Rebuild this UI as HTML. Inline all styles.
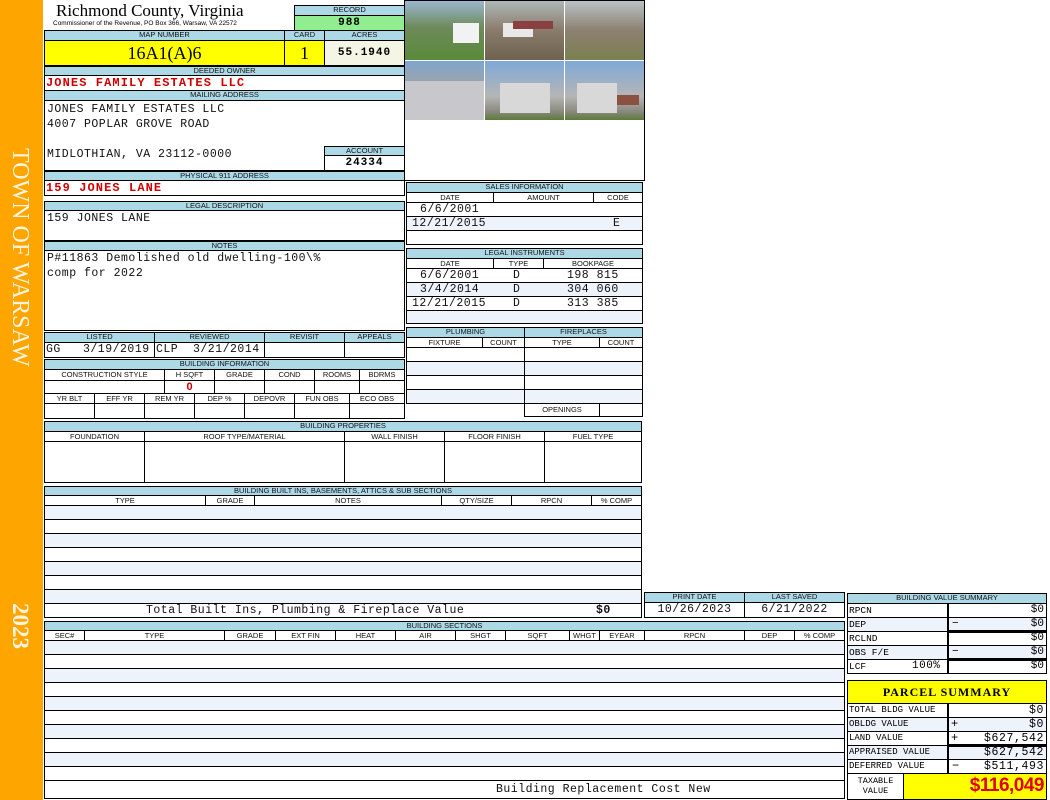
<!DOCTYPE html>
<html><head><meta charset="utf-8"><style>
*{margin:0;padding:0;box-sizing:border-box}
body{width:1050px;height:800px;background:#fff;position:relative;overflow:hidden;font-family:"Liberation Sans",sans-serif}
div{position:absolute}
.b{border:1px solid #000;overflow:hidden}
.h{background:#add8e6;border:1px solid #000;font-size:7.5px;line-height:8px;text-align:center;color:#111;overflow:hidden;white-space:nowrap}
.w{background:#fff;border:1px solid #000;font-size:7.5px;line-height:8px;text-align:center;color:#111;overflow:hidden;white-space:nowrap}
.m{font-family:"Liberation Mono",monospace;font-size:11.5px;white-space:nowrap;color:#111;letter-spacing:0.5px}
.rd{color:#d00000;font-weight:bold;font-family:"Liberation Mono",monospace;font-size:12px;letter-spacing:1.1px}
.l{background:#eef2fb}
.ln{height:1px;background:#000}
.vl{width:1px;background:#000}
</style></head><body>
<div style="left:0;top:0;width:43px;height:800px;background:#ffa500"></div>
<div style="left:10px;top:148px;width:0;height:0"><div style="transform:rotate(90deg);transform-origin:0 0;left:22px;top:0;white-space:nowrap;color:#fff4e0;font-family:'Liberation Serif',serif;font-size:24px;line-height:24px">TOWN OF WARSAW</div></div>
<div style="left:10px;top:603px;width:0;height:0"><div style="transform:rotate(90deg);transform-origin:0 0;left:22px;top:0;white-space:nowrap;color:#fff4e0;font-family:'Liberation Serif',serif;font-size:23px;line-height:24px;font-weight:bold">2023</div></div>

<div style="left:56px;top:1px;font-family:'Liberation Serif',serif;font-size:17px;line-height:20px">Richmond County, Virginia</div>
<div style="left:53px;top:20px;font-size:6.5px;line-height:8px;white-space:nowrap">Commissioner of the Revenue, PO Box 366, Warsaw, VA 22572</div>
<div class="h" style="left:294px;top:5px;width:111px;height:11px">RECORD</div>
<div class="b" style="left:294px;top:15px;width:111px;height:16px;background:#90ee90;text-align:center;font:bold 11px 'Liberation Mono',monospace;line-height:14px;letter-spacing:1px">988</div>
<div class="h" style="left:44px;top:30px;width:241px;height:11px">MAP NUMBER</div>
<div class="h" style="left:284px;top:30px;width:41px;height:11px">CARD</div>
<div class="h" style="left:324px;top:30px;width:81px;height:11px">ACRES</div>
<div class="b" style="left:44px;top:40px;width:241px;height:26px;background:#ffff00;text-align:center;font-family:'Liberation Serif',serif;font-size:18px;line-height:24px">16A1(A)6</div>
<div class="b" style="left:284px;top:40px;width:41px;height:26px;background:#ffff00;text-align:center;font-family:'Liberation Serif',serif;font-size:18px;line-height:24px">1</div>
<div class="b" style="left:324px;top:40px;width:81px;height:26px;background:#f5f5e6;text-align:center;font:bold 11px 'Liberation Mono',monospace;line-height:24px;letter-spacing:1px">55.1940</div>
<div class="h" style="left:44px;top:66px;width:361px;height:10px">DEEDED OWNER</div>
<div class="b" style="left:44px;top:75px;width:361px;height:16px"><div class="rd" style="left:1px;top:0">JONES FAMILY ESTATES LLC</div></div>
<div class="h" style="left:44px;top:90px;width:361px;height:11px">MAILING ADDRESS</div>
<div class="b" style="left:44px;top:100px;width:361px;height:71px">
<div class="m" style="left:2px;top:2px">JONES FAMILY ESTATES LLC</div>
<div class="m" style="left:2px;top:17px">4007 POPLAR GROVE ROAD</div>
<div class="m" style="left:2px;top:47px">MIDLOTHIAN, VA 23112-0000</div></div>
<div class="h" style="left:324px;top:146px;width:81px;height:10px">ACCOUNT</div>
<div class="b" style="left:324px;top:155px;width:81px;height:16px;text-align:center;font:bold 11px 'Liberation Mono',monospace;line-height:14px;letter-spacing:1px">24334</div>
<div class="h" style="left:44px;top:171px;width:361px;height:10px">PHYSICAL 911 ADDRESS</div>
<div class="b" style="left:44px;top:180px;width:361px;height:16px"><div class="rd" style="left:1px;top:0">159 JONES LANE</div></div>
<div class="h" style="left:44px;top:201px;width:361px;height:10px">LEGAL DESCRIPTION</div>
<div class="b" style="left:44px;top:210px;width:361px;height:31px"><div class="m" style="left:2px;top:1px">159 JONES LANE</div></div>
<div class="h" style="left:44px;top:241px;width:361px;height:10px">NOTES</div>
<div class="b" style="left:44px;top:250px;width:361px;height:81px"><div class="m" style="left:2px;top:1px">P#11863 Demolished old dwelling-100\%</div><div class="m" style="left:2px;top:16px">comp for 2022</div></div>

<div class="h" style="left:44px;top:332px;width:111px;height:11px">LISTED</div>
<div class="h" style="left:154px;top:332px;width:111px;height:11px">REVIEWED</div>
<div class="h" style="left:264px;top:332px;width:81px;height:11px">REVISIT</div>
<div class="h" style="left:344px;top:332px;width:61px;height:11px">APPEALS</div>
<div class="b" style="left:44px;top:342px;width:111px;height:16px"><div class="m" style="left:1px;top:0">GG &nbsp;&nbsp;3/19/2019</div></div>
<div class="b" style="left:154px;top:342px;width:111px;height:16px"><div class="m" style="left:1px;top:0">CLP &nbsp;3/21/2014</div></div>
<div class="b" style="left:264px;top:342px;width:81px;height:16px"></div>
<div class="b" style="left:344px;top:342px;width:61px;height:16px"></div>

<div class="h" style="left:44px;top:359px;width:361px;height:11px">BUILDING INFORMATION</div>
<div class="w" style="left:44px;top:369px;width:121px;height:12px;line-height:10px">CONSTRUCTION STYLE</div>
<div class="w" style="left:164px;top:369px;width:51px;height:12px;line-height:10px">H SQFT</div>
<div class="w" style="left:214px;top:369px;width:51px;height:12px;line-height:10px">GRADE</div>
<div class="w" style="left:264px;top:369px;width:51px;height:12px;line-height:10px">COND</div>
<div class="w" style="left:314px;top:369px;width:46px;height:12px;line-height:10px">ROOMS</div>
<div class="w" style="left:359px;top:369px;width:46px;height:12px;line-height:10px">BDRMS</div>
<div class="b" style="left:44px;top:380px;width:121px;height:14px"></div>
<div class="b" style="left:164px;top:380px;width:51px;height:14px;text-align:center;color:#c00;font-weight:bold;font-size:11px;line-height:12px">0</div>
<div class="b" style="left:214px;top:380px;width:51px;height:14px"></div>
<div class="b" style="left:264px;top:380px;width:51px;height:14px"></div>
<div class="b" style="left:314px;top:380px;width:46px;height:14px"></div>
<div class="b" style="left:359px;top:380px;width:46px;height:14px"></div>
<div class="w" style="left:44px;top:393px;width:51px;height:11px;line-height:9px">YR BLT</div>
<div class="w" style="left:94px;top:393px;width:51px;height:11px;line-height:9px">EFF YR</div>
<div class="w" style="left:144px;top:393px;width:51px;height:11px;line-height:9px">REM YR</div>
<div class="w" style="left:194px;top:393px;width:51px;height:11px;line-height:9px">DEP %</div>
<div class="w" style="left:244px;top:393px;width:51px;height:11px;line-height:9px">DEPOVR</div>
<div class="w" style="left:294px;top:393px;width:56px;height:11px;line-height:9px">FUN OBS</div>
<div class="w" style="left:349px;top:393px;width:56px;height:11px;line-height:9px">ECO OBS</div>
<div class="b" style="left:44px;top:403px;width:51px;height:16px"></div>
<div class="b" style="left:94px;top:403px;width:51px;height:16px"></div>
<div class="b" style="left:144px;top:403px;width:51px;height:16px"></div>
<div class="b" style="left:194px;top:403px;width:51px;height:16px"></div>
<div class="b" style="left:244px;top:403px;width:51px;height:16px"></div>
<div class="b" style="left:294px;top:403px;width:56px;height:16px"></div>
<div class="b" style="left:349px;top:403px;width:56px;height:16px"></div>

<!-- photos -->
<div class="b" style="left:404px;top:0;width:241px;height:181px"></div>
<svg style="position:absolute;left:405px;top:1px" width="239" height="119">
<defs>
<linearGradient id="g1" x1="0" y1="0" x2="0" y2="1"><stop offset="0" stop-color="#9bb7d0"/><stop offset=".45" stop-color="#6d8a5a"/><stop offset="1" stop-color="#5a8a3a"/></linearGradient>
<linearGradient id="g2" x1="0" y1="0" x2="0" y2="1"><stop offset="0" stop-color="#aeb7b8"/><stop offset=".5" stop-color="#8a7b6a"/><stop offset="1" stop-color="#6e6250"/></linearGradient>
<linearGradient id="g3" x1="0" y1="0" x2="0" y2="1"><stop offset="0" stop-color="#b9c2c6"/><stop offset=".5" stop-color="#8c8070"/><stop offset="1" stop-color="#7c8050"/></linearGradient>
<linearGradient id="g4" x1="0" y1="0" x2="0" y2="1"><stop offset="0" stop-color="#7fa6cf"/><stop offset=".35" stop-color="#9aa3ad"/><stop offset="1" stop-color="#b8b8b8"/></linearGradient>
<linearGradient id="g5" x1="0" y1="0" x2="0" y2="1"><stop offset="0" stop-color="#7fa9d8"/><stop offset=".6" stop-color="#b5b5b5"/><stop offset=".85" stop-color="#8a8a80"/><stop offset="1" stop-color="#5d7a3a"/></linearGradient>
</defs>
<rect x="0" y="0" width="79" height="59" fill="url(#g1)"/><rect x="48" y="22" width="26" height="20" fill="#f2f2f2"/>
<rect x="80" y="0" width="79" height="59" fill="url(#g2)"/><rect x="98" y="22" width="30" height="14" fill="#e8e8e8"/><rect x="108" y="20" width="40" height="8" fill="#8a4040"/>
<rect x="160" y="0" width="79" height="59" fill="url(#g3)"/>
<rect x="0" y="60" width="79" height="59" fill="url(#g4)"/><rect x="0" y="80" width="79" height="39" fill="#c8c8cc"/>
<rect x="80" y="60" width="79" height="59" fill="url(#g5)"/><rect x="95" y="82" width="50" height="30" fill="#d8d8d8"/>
<rect x="160" y="60" width="79" height="59" fill="url(#g5)"/><rect x="172" y="82" width="40" height="30" fill="#d8d8d8"/><rect x="212" y="94" width="22" height="10" fill="#8a5040"/>
</svg>

<!-- sales -->
<div class="h" style="left:406px;top:182px;width:237px;height:11px">SALES INFORMATION</div>
<div class="w" style="left:406px;top:192px;width:88px;height:11px;line-height:9px">DATE</div>
<div class="w" style="left:493px;top:192px;width:101px;height:11px;line-height:9px">AMOUNT</div>
<div class="w" style="left:593px;top:192px;width:50px;height:11px;line-height:9px">CODE</div>
<div class="b" style="left:406px;top:202px;width:237px;height:43px">
<div class="l" style="left:0;top:14px;width:235px;height:14px"></div>
<div class="ln" style="left:0;top:13px;width:235px"></div><div class="ln" style="left:0;top:27px;width:235px"></div>
<div class="m" style="left:13px;top:0">6/6/2001</div><div class="m" style="left:5px;top:14px">12/21/2015</div><div class="m" style="left:206px;top:14px">E</div></div>

<div class="h" style="left:406px;top:248px;width:237px;height:11px">LEGAL INSTRUMENTS</div>
<div class="w" style="left:406px;top:258px;width:88px;height:11px;line-height:9px">DATE</div>
<div class="w" style="left:493px;top:258px;width:51px;height:11px;line-height:9px">TYPE</div>
<div class="w" style="left:543px;top:258px;width:100px;height:11px;line-height:9px">BOOKPAGE</div>
<div class="b" style="left:406px;top:268px;width:237px;height:56px">
<div class="l" style="left:0;top:14px;width:235px;height:14px"></div><div class="l" style="left:0;top:42px;width:235px;height:14px"></div>
<div class="ln" style="left:0;top:13px;width:235px"></div><div class="ln" style="left:0;top:27px;width:235px"></div><div class="ln" style="left:0;top:41px;width:235px"></div>
<div class="m" style="left:13px;top:0">6/6/2001</div><div class="m" style="left:106px;top:0">D</div><div class="m" style="left:160px;top:0">198 815</div>
<div class="m" style="left:13px;top:14px">3/4/2014</div><div class="m" style="left:106px;top:14px">D</div><div class="m" style="left:160px;top:14px">304 060</div>
<div class="m" style="left:5px;top:28px">12/21/2015</div><div class="m" style="left:106px;top:28px">D</div><div class="m" style="left:160px;top:28px">313 385</div></div>

<div class="h" style="left:406px;top:327px;width:119px;height:11px">PLUMBING</div>
<div class="h" style="left:524px;top:327px;width:119px;height:11px">FIREPLACES</div>
<div class="w" style="left:406px;top:337px;width:77px;height:11px;line-height:9px">FIXTURE</div>
<div class="w" style="left:482px;top:337px;width:43px;height:11px;line-height:9px">COUNT</div>
<div class="w" style="left:524px;top:337px;width:76px;height:11px;line-height:9px">TYPE</div>
<div class="w" style="left:599px;top:337px;width:44px;height:11px;line-height:9px">COUNT</div>
<div class="b" style="left:406px;top:347px;width:119px;height:57px">
<div class="l" style="left:0;top:14px;width:117px;height:14px"></div><div class="l" style="left:0;top:42px;width:117px;height:14px"></div>
<div class="ln" style="left:0;top:13px;width:117px"></div><div class="ln" style="left:0;top:27px;width:117px"></div><div class="ln" style="left:0;top:41px;width:117px"></div></div>
<div class="b" style="left:524px;top:347px;width:119px;height:57px">
<div class="l" style="left:0;top:14px;width:117px;height:14px"></div><div class="l" style="left:0;top:42px;width:117px;height:14px"></div>
<div class="ln" style="left:0;top:13px;width:117px"></div><div class="ln" style="left:0;top:27px;width:117px"></div><div class="ln" style="left:0;top:41px;width:117px"></div></div>
<div class="w" style="left:524px;top:403px;width:76px;height:14px;line-height:12px">OPENINGS</div>
<div class="b" style="left:599px;top:403px;width:44px;height:14px"></div>

<!-- building properties -->
<div class="h" style="left:44px;top:421px;width:598px;height:11px">BUILDING PROPERTIES</div>
<div class="w" style="left:44px;top:431px;width:101px;height:11px;line-height:9px">FOUNDATION</div>
<div class="w" style="left:144px;top:431px;width:201px;height:11px;line-height:9px">ROOF TYPE/MATERIAL</div>
<div class="w" style="left:344px;top:431px;width:101px;height:11px;line-height:9px">WALL FINISH</div>
<div class="w" style="left:444px;top:431px;width:101px;height:11px;line-height:9px">FLOOR FINISH</div>
<div class="w" style="left:544px;top:431px;width:98px;height:11px;line-height:9px">FUEL TYPE</div>
<div class="b" style="left:44px;top:441px;width:101px;height:42px"></div>
<div class="b" style="left:144px;top:441px;width:201px;height:42px"></div>
<div class="b" style="left:344px;top:441px;width:101px;height:42px"></div>
<div class="b" style="left:444px;top:441px;width:101px;height:42px"></div>
<div class="b" style="left:544px;top:441px;width:98px;height:42px"></div>

<!-- built ins -->
<div class="h" style="left:44px;top:486px;width:598px;height:10px">BUILDING BUILT INS, BASEMENTS, ATTICS &amp; SUB SECTIONS</div>
<div class="w" style="left:44px;top:495px;width:162px;height:11px;line-height:9px">TYPE</div>
<div class="w" style="left:205px;top:495px;width:50px;height:11px;line-height:9px">GRADE</div>
<div class="w" style="left:254px;top:495px;width:188px;height:11px;line-height:9px">NOTES</div>
<div class="w" style="left:441px;top:495px;width:71px;height:11px;line-height:9px">QTY/SIZE</div>
<div class="w" style="left:511px;top:495px;width:81px;height:11px;line-height:9px">RPCN</div>
<div class="w" style="left:591px;top:495px;width:51px;height:11px;line-height:9px">% COMP</div>
<div class="b" style="left:44px;top:505px;width:598px;height:113px">
<div class="l" style="left:0;top:0;width:596px;height:14px"></div><div class="l" style="left:0;top:28px;width:596px;height:14px"></div><div class="l" style="left:0;top:56px;width:596px;height:14px"></div><div class="l" style="left:0;top:84px;width:596px;height:14px"></div>
<div class="ln" style="left:0;top:13px;width:596px"></div><div class="ln" style="left:0;top:27px;width:596px"></div><div class="ln" style="left:0;top:41px;width:596px"></div><div class="ln" style="left:0;top:55px;width:596px"></div><div class="ln" style="left:0;top:69px;width:596px"></div><div class="ln" style="left:0;top:83px;width:596px"></div><div class="ln" style="left:0;top:97px;width:596px"></div>
<div class="m" style="left:101px;top:98px">Total Built Ins, Plumbing &amp; Fireplace Value</div>
<div class="m" style="left:551px;top:98px;font-weight:bold">$0</div></div>

<div class="h" style="left:644px;top:592px;width:101px;height:11px">PRINT DATE</div>
<div class="h" style="left:744px;top:592px;width:101px;height:11px">LAST SAVED</div>
<div class="b" style="left:644px;top:602px;width:101px;height:16px;text-align:center"><div class="m" style="position:static;line-height:14px">10/26/2023</div></div>
<div class="b" style="left:744px;top:602px;width:101px;height:16px;text-align:center"><div class="m" style="position:static;line-height:14px">6/21/2022</div></div>

<!-- building sections -->
<div class="h" style="left:44px;top:621px;width:801px;height:10px">BUILDING SECTIONS</div>
<div class="w" style="left:44px;top:630px;width:41px;height:11px;line-height:9px">SEC#</div>
<div class="w" style="left:84px;top:630px;width:141px;height:11px;line-height:9px">TYPE</div>
<div class="w" style="left:224px;top:630px;width:52px;height:11px;line-height:9px">GRADE</div>
<div class="w" style="left:275px;top:630px;width:61px;height:11px;line-height:9px">EXT FIN</div>
<div class="w" style="left:335px;top:630px;width:61px;height:11px;line-height:9px">HEAT</div>
<div class="w" style="left:395px;top:630px;width:61px;height:11px;line-height:9px">AIR</div>
<div class="w" style="left:455px;top:630px;width:51px;height:11px;line-height:9px">SHGT</div>
<div class="w" style="left:505px;top:630px;width:65px;height:11px;line-height:9px">SQFT</div>
<div class="w" style="left:569px;top:630px;width:31px;height:11px;line-height:9px">WHGT</div>
<div class="w" style="left:599px;top:630px;width:46px;height:11px;line-height:9px">EYEAR</div>
<div class="w" style="left:644px;top:630px;width:101px;height:11px;line-height:9px">RPCN</div>
<div class="w" style="left:744px;top:630px;width:51px;height:11px;line-height:9px">DEP</div>
<div class="w" style="left:794px;top:630px;width:51px;height:11px;line-height:9px">% COMP</div>
<div class="b" style="left:44px;top:640px;width:801px;height:159px">
<div class="l" style="left:0;top:0;width:799px;height:14px"></div><div class="l" style="left:0;top:28px;width:799px;height:14px"></div><div class="l" style="left:0;top:56px;width:799px;height:14px"></div><div class="l" style="left:0;top:84px;width:799px;height:14px"></div><div class="l" style="left:0;top:112px;width:799px;height:14px"></div>
<div class="ln" style="left:0;top:13px;width:799px"></div><div class="ln" style="left:0;top:27px;width:799px"></div><div class="ln" style="left:0;top:41px;width:799px"></div><div class="ln" style="left:0;top:55px;width:799px"></div><div class="ln" style="left:0;top:69px;width:799px"></div><div class="ln" style="left:0;top:83px;width:799px"></div><div class="ln" style="left:0;top:97px;width:799px"></div><div class="ln" style="left:0;top:111px;width:799px"></div><div class="ln" style="left:0;top:125px;width:799px"></div><div class="ln" style="left:0;top:139px;width:799px"></div>
<div class="m" style="left:451px;top:142px">Building Replacement Cost New</div></div>

<!-- building value summary -->
<div class="h" style="left:847px;top:593px;width:200px;height:11px">BUILDING VALUE SUMMARY</div>
<div class="b" style="left:847px;top:603px;width:200px;height:71px;font-family:'Liberation Mono',monospace;font-size:9.5px">
<div class="l" style="left:0;top:14px;width:198px;height:14px"></div><div class="l" style="left:0;top:42px;width:198px;height:14px"></div>
<div class="ln" style="left:0;top:13px;width:198px"></div><div class="ln" style="left:99px;top:26px;width:99px;height:3px"></div><div class="ln" style="left:0;top:27px;width:198px"></div><div class="ln" style="left:0;top:41px;width:198px"></div><div class="ln" style="left:99px;top:54px;width:99px;height:3px"></div><div class="ln" style="left:0;top:55px;width:198px"></div>
<div class="vl" style="left:99px;top:0;height:70px;width:2px"></div>
<div style="left:1px;top:1px">RPCN</div><div style="left:1px;top:15px">DEP</div><div style="left:1px;top:29px">RCLND</div><div style="left:1px;top:43px">OBS F/E</div><div style="left:1px;top:57px">LCF</div>
<div style="left:64px;top:56px;font-size:11px;letter-spacing:0.5px">100%</div>
<div style="left:104px;top:14px;font-size:11px">&minus;</div><div style="left:104px;top:42px;font-size:11px">&minus;</div>
<div style="right:2px;top:0;font-size:11px">$0</div><div style="right:2px;top:14px;font-size:11px">$0</div><div style="right:2px;top:28px;font-size:11px">$0</div><div style="right:2px;top:42px;font-size:11px">$0</div><div style="right:2px;top:56px;font-size:11px">$0</div></div>

<!-- parcel summary -->
<div class="b" style="left:847px;top:680px;width:200px;height:24px;background:#ffff00;text-align:center;font-family:'Liberation Serif',serif;font-weight:bold;font-size:12px;line-height:22px;letter-spacing:1px">PARCEL SUMMARY</div>
<div class="b" style="left:847px;top:703px;width:200px;height:71px;font-family:'Liberation Mono',monospace;font-size:9px">
<div class="l" style="left:0;top:14px;width:198px;height:14px"></div><div class="l" style="left:0;top:42px;width:198px;height:14px"></div>
<div class="ln" style="left:0;top:13px;width:198px"></div><div class="ln" style="left:0;top:27px;width:198px"></div><div class="ln" style="left:99px;top:40px;width:99px;height:3px"></div><div class="ln" style="left:0;top:41px;width:198px"></div><div class="ln" style="left:0;top:55px;width:198px"></div>
<div class="vl" style="left:99px;top:0;height:70px;width:2px"></div>
<div style="left:1px;top:1px">TOTAL BLDG VALUE</div><div style="left:1px;top:15px">OBLDG VALUE</div><div style="left:1px;top:29px">LAND VALUE</div><div style="left:1px;top:43px">APPRAISED VALUE</div><div style="left:1px;top:57px">DEFERRED VALUE</div>
<div style="left:103px;top:13px;font-size:12px">+</div><div style="left:103px;top:27px;font-size:12px">+</div><div style="left:104px;top:55px;font-size:12px">&minus;</div>
<div style="right:2px;top:0;font-size:11.5px;letter-spacing:0.6px">$0</div><div style="right:2px;top:14px;font-size:11.5px;letter-spacing:0.6px">$0</div><div style="right:2px;top:28px;font-size:11.5px;letter-spacing:0.6px">$627,542</div><div style="right:2px;top:42px;font-size:11.5px;letter-spacing:0.6px">$627,542</div><div style="right:2px;top:56px;font-size:11.5px;letter-spacing:0.6px">$511,493</div></div>
<div class="b" style="left:847px;top:773px;width:57px;height:27px;text-align:center;font-family:'Liberation Mono',monospace;font-size:8.5px;line-height:10px;padding-top:2px">TAXABLE<br>VALUE</div>
<div class="b" style="left:903px;top:773px;width:144px;height:27px;background:#ffff00;text-align:right;padding-right:2px;color:#e00000;font-weight:bold;font-size:19px;line-height:24px;letter-spacing:-0.5px">$116,049</div>
</body></html>
